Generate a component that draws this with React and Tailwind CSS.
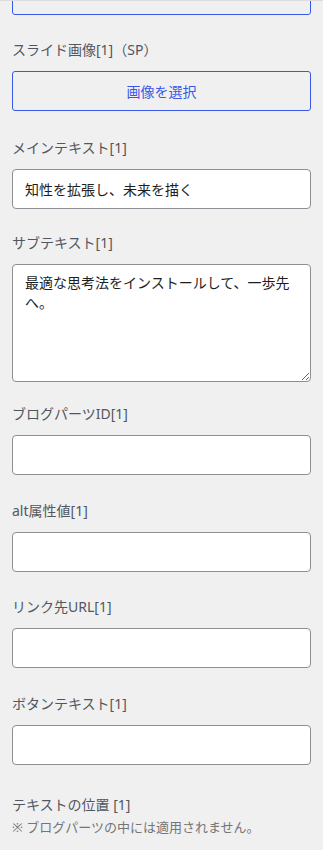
import React from "react";

const font = { fontFamily: '"Noto Sans", "Noto Sans CJK JP", sans-serif' };

function Label({ children }) {
  return (
    <div className="text-[14px] leading-[22px] text-[#50575e] mb-[10px]">{children}</div>
  );
}

function TextInput({ value = "" }) {
  return (
    <input
      type="text"
      defaultValue={value}
      className="block w-full h-[40px] px-3 bg-white border border-[#8c8f94] rounded-[4px] text-[14px] text-[#1e1e1e] outline-none"
      style={font}
    />
  );
}

export default function App() {
  return (
    <div className="min-h-[850px] bg-[#f0f0f0] border-t border-[#dcdcde]" style={font}>
      <div className="overflow-hidden px-3 pb-6">
        <button className="block w-full -mt-[26px] h-[40px] pb-[7px] border border-[#3858e9] rounded-[3px] text-[14px] text-[#3858e9] bg-transparent">
          画像を選択
        </button>

        <div className="mt-[24px]">
          <Label>スライド画像[1]（SP）</Label>
          <button className="block w-full h-[40px] border border-[#3858e9] rounded-[3px] text-[14px] text-[#3858e9] bg-transparent">
            画像を選択
          </button>
        </div>

        <div className="mt-[26px]">
          <Label>メインテキスト[1]</Label>
          <TextInput value="知性を拡張し、未来を描く" />
        </div>

        <div className="mt-[23px]">
          <Label>サブテキスト[1]</Label>
          <textarea
            defaultValue="最適な思考法をインストールして、一歩先へ。"
            className="block w-full h-[118px] px-3 py-2 bg-white border border-[#8c8f94] rounded-[4px] text-[14px] leading-[20px] text-[#1e1e1e] outline-none"
            style={font}
          />
        </div>

        <div className="mt-[21px]">
          <Label>ブログパーツID[1]</Label>
          <TextInput />
        </div>

        <div className="mt-[25px]">
          <Label>alt属性値[1]</Label>
          <TextInput />
        </div>

        <div className="mt-[24px]">
          <Label>リンク先URL[1]</Label>
          <TextInput />
        </div>

        <div className="mt-[25px]">
          <Label>ボタンテキスト[1]</Label>
          <TextInput />
        </div>

        <div className="mt-[29px]">
          <div className="text-[14px] leading-[22px] text-[#50575e]">テキストの位置 [1]</div>
          <div className="mt-[1px] text-[13px] leading-[20px] text-[#757575]">※ ブログパーツの中には適用されません。</div>
        </div>
      </div>
    </div>
  );
}
